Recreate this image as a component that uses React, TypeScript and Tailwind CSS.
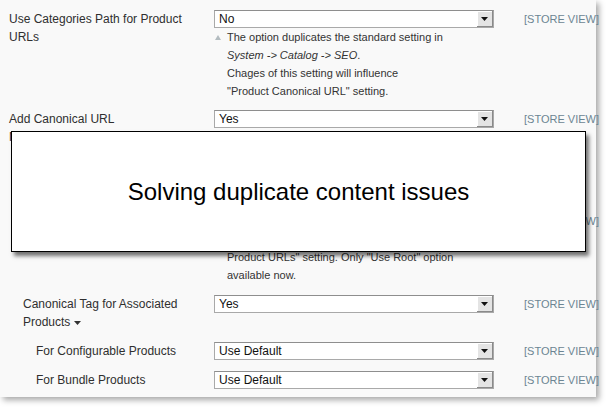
import React from 'react';

const SCOPE = '[STORE VIEW]';

// select box with the old-style grey arrow button
const Select: React.FC<{ value: string }> = ({ value }) => (
  <div className="relative h-[18px] w-[280px] border border-[#a9a9a9] border-t-[#8e8e8e] bg-white">
    <span className="absolute left-[4px] top-0 text-[12px] leading-[16px] text-[#111]">{value}</span>
    <div className="absolute right-0 top-0 flex h-[16px] w-[16px] items-center justify-center border-r border-b border-[#8a8a8a] bg-[#e4e4e4] shadow-[inset_1px_1px_0_#ffffff]">
      <svg width="7" height="4" viewBox="0 0 7 4">
        <path d="M0 0h7L3.5 4z" fill="#111" />
      </svg>
    </div>
  </div>
);

const Note: React.FC<{ children: React.ReactNode }> = ({ children }) => (
  <div className="relative pl-[13px] text-[11px] leading-[18px] text-[#333]">
    <svg className="absolute left-[1px] top-[7px]" width="6" height="5" viewBox="0 0 6 5">
      <path d="M3 0l3 5H0z" fill="#b3bcc0" />
    </svg>
    {children}
  </div>
);

interface RowProps {
  label: React.ReactNode;
  value: string;
  indent?: number;
  note?: React.ReactNode;
  className?: string;
}

const Row: React.FC<RowProps> = ({ label, value, indent = 0, note, className = '' }) => (
  <div className={`flex items-start ${className}`}>
    <div
      className={`shrink-0 whitespace-nowrap text-[12px] leading-[18px] text-[#2f2f2f] ${
        indent === 2 ? 'w-[205px] pl-[27px]' : indent === 1 ? 'w-[205px] pl-[14px]' : 'w-[205px]'
      }`}
    >
      {label}
    </div>
    <div className="w-[280px] shrink-0">
      <Select value={value} />
      {note && <Note>{note}</Note>}
    </div>
    <div className="ml-[30px] shrink-0 whitespace-nowrap text-[11px] leading-[18px] text-[#6c8593]">{SCOPE}</div>
  </div>
);

export default function App() {
  return (
    <div
      className="h-[410px] w-[610px] overflow-hidden bg-white"
      style={{ fontFamily: '"Liberation Sans", Arial, Helvetica, sans-serif' }}
    >
      <div className="relative h-[397px] w-[596px] bg-[#f9f9f9] pl-[9px] pt-[10px] shadow-[3px_3px_6px_rgba(0,0,0,0.35)]">
        <Row
          className="mb-[10px]"
          label={<>Use Categories Path for Product<br />URLs</>}
          value="No"
          note={
            <>
              The option duplicates the standard setting in
              <br />
              <i>System -&gt; Catalog -&gt; SEO</i>.
              <br />
              Chages of this setting will influence
              <br />
              "Product Canonical URL" setting.
            </>
          }
        />
        <Row
          className="mb-[12px]"
          label={<>Add Canonical URL<br />Meta Header</>}
          value="Yes"
          note={
            <>
              Adds canonical link to the page head.
              <br />
              Search engines will index the
              <br />
              canonical address only.
              <br />
              &nbsp;
            </>
          }
        />
        <Row
          className="mb-[11px]"
          indent={1}
          label="Canonical URL Type"
          value="Use Root"
          note={
            <>
              Depends on "Use Categories Path for
              <br />
              Product URLs" setting. Only "Use Root" option
              <br />
              available now.
            </>
          }
        />
        <Row
          className="mb-[11px]"
          indent={1}
          label={
            <>
              Canonical Tag for Associated
              <br />
              Products
              <svg className="ml-[4px] inline-block align-middle" width="7" height="4" viewBox="0 0 7 4">
                <path d="M0 0h7L3.5 4z" fill="#333" />
              </svg>
            </>
          }
          value="Yes"
        />
        <Row className="mb-[11px]" indent={2} label="For Configurable Products" value="Use Default" />
        <Row indent={2} label="For Bundle Products" value="Use Default" />

        {/* caption box laid over the form */}
        <div className="absolute left-[11px] top-[131px] flex h-[121px] w-[575px] items-center justify-center border border-black bg-white shadow-[3px_4px_4px_rgba(0,0,0,0.55)]">
          <span className="text-[24px] text-black">Solving duplicate content issues</span>
        </div>
      </div>
    </div>
  );
}
